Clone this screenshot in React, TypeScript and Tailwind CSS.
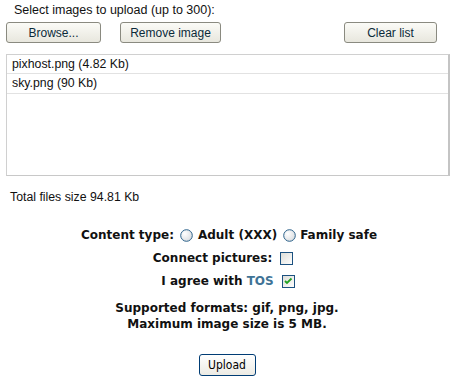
import React from "react";

const Radio = () => (
  <svg width="13" height="13" viewBox="0 0 13 13" className="shrink-0">
    <defs>
      <radialGradient id="rg" cx="0.35" cy="0.35" r="0.8">
        <stop offset="0" stopColor="#ffffff" />
        <stop offset="1" stopColor="#d4d8dc" />
      </radialGradient>
    </defs>
    <circle cx="6.5" cy="6.5" r="5.8" fill="url(#rg)" stroke="#2c628b" strokeWidth="1" />
  </svg>
);

const Checkbox = ({ checked }: { checked?: boolean }) => (
  <svg width="13" height="13" viewBox="0 0 13 13" className="shrink-0">
    <defs>
      <linearGradient id="cg" x1="0" y1="0" x2="1" y2="1">
        <stop offset="0" stopColor="#dcdcd6" />
        <stop offset="1" stopColor="#ffffff" />
      </linearGradient>
    </defs>
    <rect x="0.5" y="0.5" width="12" height="12" fill="url(#cg)" stroke="#1c5180" />
    {checked && (
      <path d="M3 6 L5 8 L9.5 3.5" fill="none" stroke="#21a121" strokeWidth="1.8" />
    )}
  </svg>
);

const btn =
  "h-[21px] rounded-[3px] border border-[#8a8a80] bg-gradient-to-b from-[#fbfbf7] to-[#e8e7de] text-[12px] text-[#0b2a3a] flex items-center justify-center";

export default function App() {
  return (
    <div
      className="w-[454px] h-[380px] bg-white text-black relative"
      style={{ fontFamily: '"Liberation Sans", Arial, sans-serif' }}
    >
      <div className="pt-[3px] pl-[14px] text-[12.5px] leading-[14px] text-[#111]">
        Select images to upload (up to 300):
      </div>
      <div className="flex mt-[5px] pl-[6px]">
        <button className={btn + " w-[95px]"}>Browse...</button>
        <button className={btn + " w-[101px] ml-[19px]"}>Remove image</button>
        <button className={btn + " w-[93px] ml-[123px]"}>Clear list</button>
      </div>
      <div className="mt-[11px] ml-[6px] w-[444px] h-[122px] border-t border-l border-[#d0d0d0] border-b border-b-[#c8c8c8] border-r-[2px] border-r-[#c4c4c4] flex flex-col text-[12.3px] text-[#111]">
        <div className="h-[19px] border-b border-[#e2e2e2] pl-[5px] flex items-center">
          pixhost.png (4.82 Kb)
        </div>
        <div className="h-[20px] border-b border-[#e2e2e2] pl-[5px] flex items-center">
          sky.png (90 Kb)
        </div>
      </div>
      <div className="mt-[14px] pl-[10px] text-[12.3px] leading-[14px] text-[#111]">
        Total files size 94.81 Kb
      </div>
      <div
        className="flex flex-col items-center mt-[23px] text-[12px] font-bold text-[#111]"
        style={{ fontFamily: '"DejaVu Sans", Verdana, sans-serif' }}
      >
        <div className="flex items-center h-[16px] ml-[4px]">
          <span>Content type:</span>
          <span className="ml-[6px]"><Radio /></span>
          <span className="ml-[5px]">Adult (XXX)</span>
          <span className="ml-[6px]"><Radio /></span>
          <span className="ml-[4px]">Family safe</span>
        </div>
        <div className="flex items-center h-[16px] mt-[7px] ml-[-8px]">
          <span>Connect pictures:</span>
          <span className="ml-[8px]"><Checkbox /></span>
        </div>
        <div className="flex items-center h-[16px] mt-[7px] ml-[2px]">
          <span>
            I agree with <span className="text-[#3f7396]">TOS</span>
          </span>
          <span className="ml-[8px]"><Checkbox checked /></span>
        </div>
        <div className="mt-[11px] text-center leading-[16px]">
          <div>Supported formats: gif, png, jpg.</div>
          <div>Maximum image size is 5 MB.</div>
        </div>
        <button
          className="mt-[22px] w-[57px] h-[22px] rounded-[3px] border border-[#003c74] bg-gradient-to-b from-[#ffffff] to-[#ecebe4] text-[12px] font-normal text-black flex items-center justify-center"
          style={{ fontFamily: '"DejaVu Sans Condensed", Tahoma, sans-serif' }}
        >
          Upload
        </button>
      </div>
    </div>
  );
}
